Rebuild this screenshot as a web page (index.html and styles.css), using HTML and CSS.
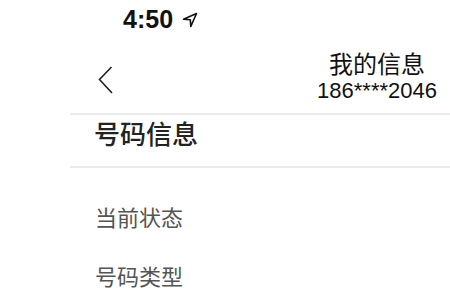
FILE: index.html
```html
<!DOCTYPE html>
<html lang="zh-CN">
<head>
<meta charset="utf-8">
<link rel="stylesheet" href="styles.css">
</head>
<body>
<div class="status">
  <span class="time">4:50</span>
  <svg class="loc" width="16" height="16" viewBox="0 0 16 16"><path d="M14.5 1.5 L1.5 7.2 L8.3 7.7 L8.8 14.5 Z" fill="none" stroke="#111" stroke-width="1.6" stroke-linejoin="round"/></svg>
</div>
<div class="nav">
  <svg class="back" width="18" height="30" viewBox="0 0 18 30"><path d="M14.5 2 L2.5 14.5 L15 28" fill="none" stroke="#222" stroke-width="1.6"/></svg>
  <div class="title">
    <div class="name">我的信息</div>
    <div class="phone">186****2046</div>
  </div>
</div>
<div class="divider"></div>
<div class="section">号码信息</div>
<div class="divider"></div>
<div class="rows">
  <div class="row">当前状态</div>
  <div class="row">号码类型</div>
</div>
</body>
</html>
```
FILE: styles.css
```css
html, body {
  margin: 0;
  padding: 0;
  background: #fff;
  width: 450px;
  height: 300px;
  overflow: hidden;
  font-family: "Noto Sans CJK SC", "Liberation Sans", sans-serif;
}
.status {
  height: 38px;
  display: flex;
  align-items: center;
  padding-left: 123px;
}
.time {
  font-family: "Liberation Sans", Arial, sans-serif;
  font-weight: bold;
  font-size: 25px;
  line-height: 38px;
  color: #111;
}
.loc {
  margin-left: 9px;
  margin-top: 1px;
}
.nav {
  height: 75px;
  display: flex;
  justify-content: space-between;
  align-items: flex-start;
}
.back {
  margin-left: 97px;
  margin-top: 27px;
}
.title {
  margin-top: 11px;
  padding-right: 13px;
  display: flex;
  flex-direction: column;
  align-items: center;
}
.name {
  font-size: 24px;
  line-height: 28px;
  color: #111;
}
.phone {
  font-family: "Liberation Sans", Arial, sans-serif;
  font-size: 22px;
  line-height: 22px;
  margin-top: 3px;
  color: #111;
}
.divider {
  margin-left: 70px;
  height: 2px;
  background: #ebebeb;
}
.section {
  height: 51px;
  box-sizing: border-box;
  padding-left: 94px;
  font-size: 26px;
  line-height: 36px;
  font-weight: 500;
  color: #222;
}
.rows {
  padding-top: 19px;
}
.row {
  padding-left: 95px;
  font-size: 22px;
  line-height: 59px;
  color: #555;
}
```
